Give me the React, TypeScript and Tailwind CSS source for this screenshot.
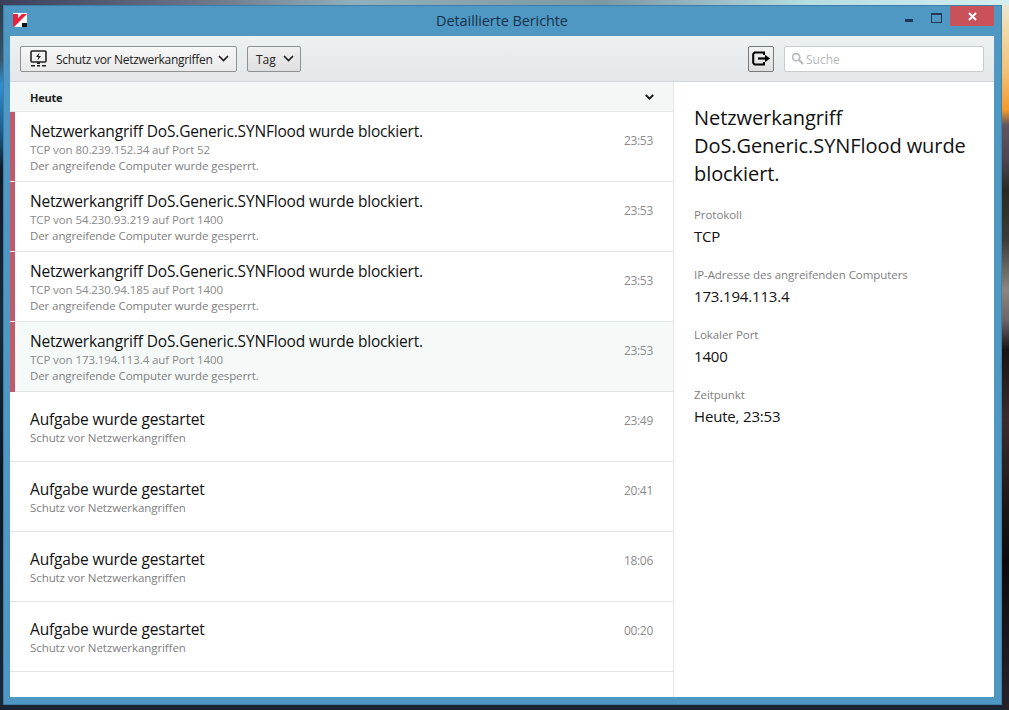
import React from "react";

const attacks = [
  ["TCP von 80.239.152.34 auf Port 52", "23:53"],
  ["TCP von 54.230.93.219 auf Port 1400", "23:53"],
  ["TCP von 54.230.94.185 auf Port 1400", "23:53"],
  ["TCP von 173.194.113.4 auf Port 1400", "23:53"],
];
const tasks = ["23:49", "20:41", "18:06", "00:20"];
const details = [
  ["Protokoll", "TCP"],
  ["IP-Adresse des angreifenden Computers", "173.194.113.4"],
  ["Lokaler Port", "1400"],
  ["Zeitpunkt", "Heute, 23:53"],
];

function Chevron({ className = "", w = 1.6 }: { className?: string; w?: number }) {
  return (
    <svg width="11" height="7" viewBox="0 0 11 7" className={className} fill="none" stroke="#1a1a1a" strokeWidth={w}>
      <path d="M1 1l4.5 4.5L10 1" />
    </svg>
  );
}

export default function App() {
  return (
    <div className="h-[710px] w-[1009px] overflow-hidden pl-[3px] pr-[7px] pt-[5px] pb-[5px] font-['Open_Sans','Noto_Sans',sans-serif] [background:linear-gradient(90deg,#3b3f5c_0%,#6d7488_20%,#8fb0bc_35%,#7c98a4_60%,#b5dde2_80%,#d3eeee_100%)_top/100%_5px_no-repeat,linear-gradient(#e9e9dc_0,#f0d9a8_30px,#f3c27a_70px,#f39a2c_110px,#5f5560_125px,#4c4650_160px,#2a2a22_190px,#3c3c3a_240px,#8a8680_290px,#6b6668_320px,#181414_350px,#3a2c2c_420px,#0a0a0a_560px,#26222a_700px)_right/7px_100%_no-repeat,linear-gradient(#1b2432,#1b2432)_bottom/100%_5px_no-repeat,linear-gradient(#2a3a4c_0,#3a5468_60px,#2f8fd0_85px,#1d5e90_130px,#101a24_170px,#182a3a_320px,#0c1620_480px,#1a2838_700px)]">
      <div className="flex h-[700px] w-[999px] flex-col border border-[#3f7ea6] bg-[#4f98c4] pb-[7px] pl-[6px] pr-[7px]">
        <div className="relative flex h-[30px] shrink-0 items-center justify-center">
          <svg width="14" height="14" viewBox="0 0 14 14" className="absolute left-[3px] top-[7px]">
            <path d="M0 0h14v14H0z" fill="#ffffff" />
            <path d="M0 1h5v4l4-4h5L8 7 1 14H0z" fill="#e4233f" />
            <path d="M9 10h5v4H9z" fill="#111" />
          </svg>
          <span className="text-[14.5px] tracking-[-0.1px] text-[#17324a]">Detaillierte Berichte</span>
          <div className="absolute right-0 top-0 flex items-start">
            <div className="mr-[18px] mt-[13px] h-[3px] w-[8px] bg-[#1d3b55]" />
            <div className="mr-[8px] mt-[7px] h-[10px] w-[11px] border border-t-2 border-[#1d3b55]" />
            <div className="flex h-[20px] w-[44px] items-center justify-center bg-[#c9525a]">
              <svg width="9" height="9" viewBox="0 0 9 9" stroke="#fff" strokeWidth="2">
                <path d="M1 1l7 7M8 1l-7 7" />
              </svg>
            </div>
          </div>
        </div>

        <div className="flex h-[46px] shrink-0 items-center border-b border-[#d3d6d8] bg-[linear-gradient(#eef1f2,#e3e7e9)] pl-[10px] pr-[10px]">
          <button className="flex h-[26px] w-[217px] items-center rounded-[2px] border border-[#8e9092] bg-[linear-gradient(#f7f7f7,#e9e9e9)] pl-[9px] text-[12px] tracking-[-0.3px] text-[#222]">
            <svg width="18" height="17" viewBox="0 0 18 17" className="shrink-0">
              <path d="M2 1h13a1 1 0 0 1 1 1v9a1 1 0 0 1-1 1H2a1 1 0 0 1-1-1V2a1 1 0 0 1 1-1z" fill="none" stroke="#222" strokeWidth="1.6" />
              <path d="M9.5 2.5L6 7h2.4L7.5 10.5 11 6H8.6z" fill="#222" />
              <path d="M7 12h3v2H7zM1 15h4v1.4H1zM7 15h3v1.4H7zM12 15h4v1.4h-4z" fill="#222" />
            </svg>
            <span className="ml-[8px] whitespace-nowrap pt-[2px]">Schutz vor Netzwerkangriffen</span>
            <Chevron className="ml-[6px] shrink-0" />
          </button>
          <button className="ml-[10px] flex h-[26px] w-[54px] items-center rounded-[2px] border border-[#8e9092] bg-[linear-gradient(#f0f0f0,#dfdfdf)] pl-[8px] text-[12px] text-[#222]">
            <span className="pt-[2px]">Tag</span>
            <Chevron className="ml-[7px]" />
          </button>
          <button className="ml-auto flex h-[26px] w-[26px] items-center justify-center rounded-[2px] border border-[#77797b] bg-[linear-gradient(#f2f2f2,#dedede)]">
            <svg width="19" height="15" viewBox="0 0 19 15" fill="none">
              <path d="M12 4V1.5H2.5L1.2 3v9l1.3 1.5H12V11" stroke="#000" strokeWidth="2" />
              <path d="M6 7.5h8" stroke="#000" strokeWidth="2.2" />
              <path d="M13 3.8l5 3.7-5 3.7z" fill="#000" />
            </svg>
          </button>
          <div className="ml-[10px] flex h-[26px] w-[200px] items-center rounded-[2px] border border-[#c9ccce] bg-white pl-[6px] text-[12px] text-[#b5b8ba]">
            <svg width="13" height="13" viewBox="0 0 13 13" fill="none" stroke="#b5b8ba">
              <circle cx="5.2" cy="5.2" r="3.6" strokeWidth="1.6" />
              <path d="M8 8l4 4" strokeWidth="2.2" />
            </svg>
            <span className="ml-[2px] pt-[2px]">Suche</span>
          </div>
        </div>

        <div className="flex min-h-0 flex-1 bg-white">
          <div className="w-[664px] shrink-0 border-r border-[#e6e8e8]">
            <div className="flex h-[30px] items-center justify-between border-b border-[#e4e8e8] bg-[#f3f7f6] pl-[20px] pr-[19px] text-[11px] font-bold tracking-[-0.2px] text-[#222]">
              <span className="pt-[4px]">Heute</span>
              <Chevron className="h-[6px] w-[9px]" w={2.4} />
            </div>
            {attacks.map(([line, time], i) => (
              <div key={line} className={`flex h-[70px] ${i === 3 ? "bg-[#f5faf9]" : "bg-white"}`}>
                <div className={`w-[5px] shrink-0 border-b bg-[#c25a6c] ${i === 3 ? "border-[#c25a6c]" : "border-white"}`} />
                <div className="flex flex-1 items-start justify-between border-b border-[#e3e5e5] pl-[15px] pr-[20px] pt-[9px]">
                  <div>
                    <div className="h-[21px] whitespace-nowrap text-[15.5px] leading-[20px] tracking-[-0.18px] text-[#111]">Netzwerkangriff DoS.Generic.SYNFlood wurde blockiert.</div>
                    <div className="h-[16px] whitespace-nowrap text-[11.5px] leading-[16px] tracking-[-0.09px] text-[#8a8a8a]">{line}</div>
                    <div className="h-[16px] whitespace-nowrap text-[11.5px] leading-[16px] tracking-[-0.1px] text-[#808080]">Der angreifende Computer wurde gesperrt.</div>
                  </div>
                  <div className="mt-[12px] text-[12px] leading-[16px] tracking-[-0.3px] text-[#8c8c8c]">{time}</div>
                </div>
              </div>
            ))}
            {tasks.map((time) => (
              <div key={time} className="flex h-[70px] items-start justify-between border-b border-[#e3e5e5] pl-[20px] pr-[20px] pt-[17px]">
                <div>
                  <div className="h-[21px] text-[15.5px] leading-[20px] tracking-[-0.17px] text-[#111]">Aufgabe wurde gestartet</div>
                  <div className="h-[16px] text-[11.5px] leading-[16px] tracking-[-0.08px] text-[#808080]">Schutz vor Netzwerkangriffen</div>
                </div>
                <div className="mt-[4px] text-[12px] leading-[16px] tracking-[-0.3px] text-[#8c8c8c]">{time}</div>
              </div>
            ))}
          </div>
          <div className="flex-1 pl-[20px] pr-[20px] pt-[22px]">
            <h1 className="text-[20px] font-normal leading-[28px] tracking-[-0.07px] text-[#111]">
              Netzwerkangriff<br />DoS.Generic.SYNFlood wurde<br />blockiert.
            </h1>
            <div className="mt-[19px] flex flex-col gap-[20px]">
              {details.map(([label, value]) => (
                <div key={label} className="h-[40px]">
                  <div className="h-[16px] text-[11.5px] leading-[16px] tracking-[-0.06px] text-[#808080]">{label}</div>
                  <div className="mt-[3px] h-[20px] text-[15px] leading-[20px] tracking-[-0.17px] text-[#111]">{value}</div>
                </div>
              ))}
            </div>
          </div>
        </div>
      </div>
    </div>
  );
}
